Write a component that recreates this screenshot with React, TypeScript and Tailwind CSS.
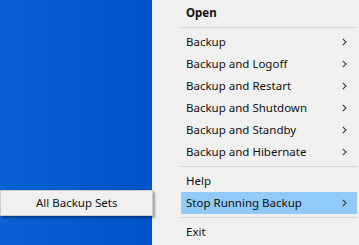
type Item = { label: string; sub?: boolean; bold?: boolean; active?: boolean; sep?: boolean };

const items: Item[] = [
  { label: "Open", bold: true },
  { label: "", sep: true },
  { label: "Backup", sub: true },
  { label: "Backup and Logoff", sub: true },
  { label: "Backup and Restart", sub: true },
  { label: "Backup and Shutdown", sub: true },
  { label: "Backup and Standby", sub: true },
  { label: "Backup and Hibernate", sub: true },
  { label: "", sep: true },
  { label: "Help" },
  { label: "Stop Running Backup", sub: true, active: true },
  { label: "", sep: true },
  { label: "Exit" },
];

function Arrow() {
  return (
    <svg width="5" height="8" viewBox="0 0 5 8" className="mr-[10px]">
      <path d="M0.8 0.8 L4 4 L0.8 7.2" fill="none" stroke="#3a3a3a" strokeWidth="1.1" />
    </svg>
  );
}

export default function App() {
  return (
    <div
      className="relative flex w-[359px] h-[245px] overflow-hidden text-[11.5px] text-[#111]"
      style={{ fontFamily: '"Noto Sans", "Open Sans", sans-serif' }}
    >
      {/* desktop */}
      <div className="w-[152px] h-full bg-gradient-to-r from-[#0a60d4] to-[#0053cb]" />

      {/* context menu */}
      <div className="flex-1 bg-[#f0f0f0] pt-[2px] pl-[29px] pr-[2px]">
        {items.map((it, i) =>
          it.sep ? (
            <div key={i} className="h-[7px] flex items-center">
              <div className="h-px w-full bg-[#d5d5d5]" />
            </div>
          ) : (
            <div
              key={i}
              className={
                "h-[22px] flex items-center justify-between pl-[5px] " +
                (it.active ? "bg-[#91c9f7]" : "")
              }
            >
              <span className={it.bold ? "font-bold" : ""}>{it.label}</span>
              {it.sub && <Arrow />}
            </div>
          )
        )}
      </div>

      {/* submenu */}
      <div className="absolute left-0 top-[190px] w-[153px] h-[26px] bg-[#f0f0f0] border border-[#cccccc] shadow-[2px_2px_2px_rgba(0,0,0,0.35)] flex items-center pl-[35px]">
        All Backup Sets
      </div>
    </div>
  );
}
